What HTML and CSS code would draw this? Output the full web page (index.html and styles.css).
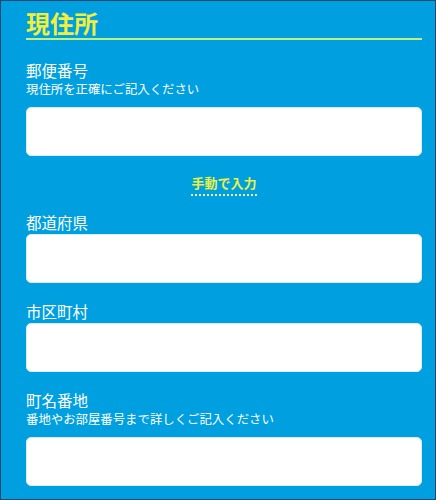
FILE: index.html
```html
<!DOCTYPE html>
<html lang="ja">
<head>
    <meta charset="UTF-8">
    <meta name="viewport" content="width=device-width, initial-scale=1.0">
    <title>現住所</title>
    <link rel="stylesheet" href="styles.css">
</head>
<body>
    <form class="address-form">
        <h2 class="section-title">現住所</h2>

        <div class="field">
            <label class="field-label" for="zip">郵便番号</label>
            <p class="field-note">現住所を正確にご記入ください</p>
            <input class="field-input" id="zip" type="text">
        </div>

        <div class="manual">
            <a class="manual-link">手動で入力</a>
        </div>

        <div class="field field-first">
            <label class="field-label" for="pref">都道府県</label>
            <input class="field-input" id="pref" type="text">
        </div>

        <div class="field">
            <label class="field-label" for="city">市区町村</label>
            <input class="field-input" id="city" type="text">
        </div>

        <div class="field">
            <label class="field-label" for="street">町名番地</label>
            <p class="field-note">番地やお部屋番号まで詳しくご記入ください</p>
            <input class="field-input" id="street" type="text">
        </div>
    </form>
</body>
</html>
```
FILE: styles.css
```css
html {
    height: 100%;
}

body {
    background: #009fe0;
    border: 1px solid #22466c;
    box-sizing: border-box;
    color: #fff;
    font-family: "Noto Sans CJK JP", "Noto Sans", sans-serif;
    margin: 0;
    min-height: 100%;
    padding: 7px 13px 13px 25px;
}

.section-title {
    border-bottom: 2px solid #bdf07c;
    color: #f2ee3c;
    font-size: 24px;
    font-weight: bold;
    line-height: 29px;
    margin: 0;
    padding-bottom: 1px;
}

.field {
    margin-top: 20px;
}

.section-title + .field {
    margin-top: 22px;
}

.field-first {
    margin-top: 18px;
}

.field-label {
    display: block;
    font-size: 15.5px;
    line-height: 16px;
    padding-bottom: 4px;
}

.field-note {
    font-size: 12.4px;
    line-height: 14px;
    margin: 0 0 9px;
    padding-bottom: 2px;
}

.field-input {
    background: #fff;
    border: 1px solid #d6eef9;
    border-radius: 5px;
    box-sizing: border-box;
    display: block;
    height: 49px;
    margin: 0;
    width: 100%;
}

.manual {
    display: flex;
    justify-content: center;
    margin-top: 18px;
}

.manual-link {
    border-bottom: 2px dotted #eef2a8;
    color: #eaf043;
    cursor: pointer;
    font-size: 13px;
    font-weight: bold;
    line-height: 18px;
    padding-bottom: 2px;
}
```
